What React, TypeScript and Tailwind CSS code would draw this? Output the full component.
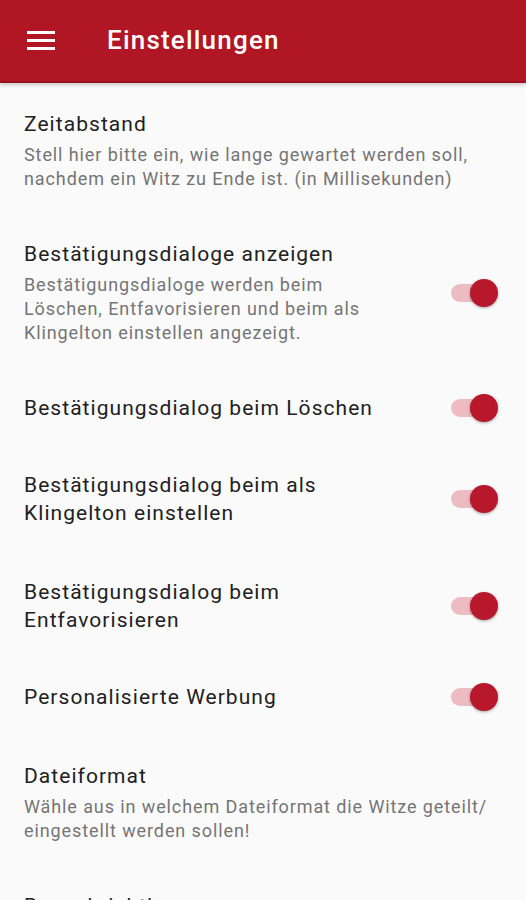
import React from "react";

const font = { fontFamily: "Roboto, 'Noto Sans', sans-serif" };

function Toggle() {
  return (
    <div className="relative w-[47px] h-[28px] shrink-0 flex items-center">
      <div className="w-[40px] h-[18px] rounded-full bg-[#ecbcc2]" />
      <div className="absolute right-0 top-0 w-[28px] h-[28px] rounded-full bg-[#b8182b] shadow-[0_1px_3px_rgba(0,0,0,0.35)]" />
    </div>
  );
}

function Item({
  title,
  summary,
  toggle,
  first,
  extra,
}: {
  title: React.ReactNode;
  summary?: React.ReactNode;
  toggle?: boolean;
  first?: boolean;
  extra?: boolean;
}) {
  return (
    <div
      className={`flex items-center pl-[24px] pr-[28px] ${first ? "pt-[27px]" : "pt-[25px]"} ${extra ? "pb-[26px]" : "pb-[24px]"}`}
    >
      <div className="flex-1 min-w-0">
        <div className="text-[21px] leading-[28px] tracking-[1.05px] text-[#212121] whitespace-nowrap">{title}</div>
        {summary && (
          <div className="mt-[5px] text-[18px] leading-[24px] tracking-[0.9px] text-[#757575] whitespace-nowrap">
            {summary}
          </div>
        )}
      </div>
      {toggle && <Toggle />}
    </div>
  );
}

export default function App() {
  return (
    <div className="w-[526px] h-[900px] overflow-hidden bg-[#fafafa]" style={font}>
      <div className="relative h-[83px] bg-[#b01624] border-b-[2px] border-[#9c0f1c] flex items-center shadow-[0_2px_4px_rgba(0,0,0,0.2)]">
        <div className="ml-[27px] w-[28px] flex flex-col gap-[5px]">
          <div className="h-[3px] bg-white" />
          <div className="h-[3px] bg-white" />
          <div className="h-[3px] bg-white" />
        </div>
        <div className="ml-[52px] text-white text-[26px] tracking-[1.2px] font-medium leading-none mb-[2px]">
          Einstellungen
        </div>
      </div>
      <Item
        first
        title="Zeitabstand"
        summary={
          <>
            Stell hier bitte ein, wie lange gewartet werden soll,
            <br />
            nachdem ein Witz zu Ende ist. (in Millisekunden)
          </>
        }
      />
      <Item
        toggle
        title="Bestätigungsdialoge anzeigen"
        summary={
          <>
            Bestätigungsdialoge werden beim
            <br />
            Löschen, Entfavorisieren und beim als
            <br />
            Klingelton einstellen angezeigt.
          </>
        }
      />
      <Item toggle title="Bestätigungsdialog beim Löschen" />
      <Item
        toggle
        extra
        title={
          <>
            Bestätigungsdialog beim als
            <br />
            Klingelton einstellen
          </>
        }
      />
      <Item
        toggle
        title={
          <>
            Bestätigungsdialog beim
            <br />
            Entfavorisieren
          </>
        }
      />
      <Item toggle extra title="Personalisierte Werbung" />
      <Item
        title="Dateiformat"
        summary={
          <>
            Wähle aus in welchem Dateiformat die Witze geteilt/
            <br />
            eingestellt werden sollen!
          </>
        }
      />
      <Item title="Benachrichtigungen" />
    </div>
  );
}
